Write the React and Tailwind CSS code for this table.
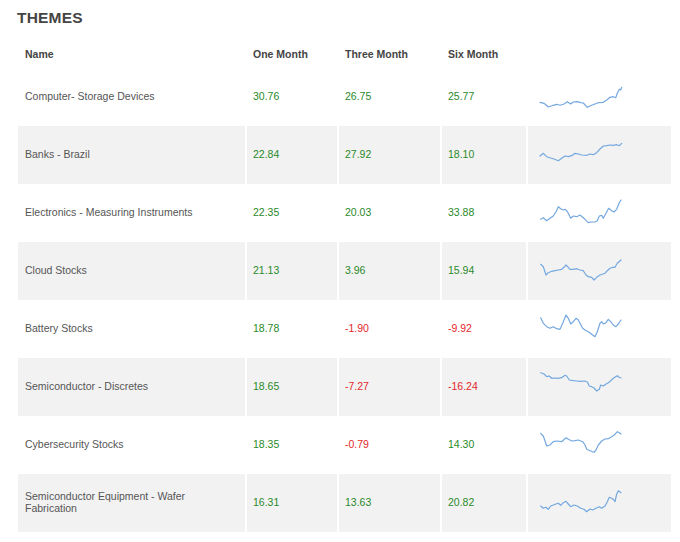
const rows = [
  {
    name: 'Computer- Storage Devices', one: '30.76', three: '26.75', six: '25.77',
    pts: [[0,18.3],[4,19.3],[8.3,23],[13.3,21.3],[16.7,20.3],[20,21.3],[24,20],[27.3,17.7],[30.7,20],[33.3,18],[37.3,17.7],[40.7,18.7],[43.3,19],[47.3,23.3],[51.7,21.3],[55,20],[58.3,18.7],[63.3,18.3],[66.7,16],[70,13.3],[73.3,12.7],[75.7,13.7],[77.3,9.3],[78.3,7.3],[79.3,5.3],[80.7,6],[81.7,3.3]],
  },
  {
    name: 'Banks - Brazil', one: '22.84', three: '27.92', six: '18.10',
    pts: [[0,14],[3.3,11.3],[6.7,14.7],[10.7,16],[14,17],[18.3,18.7],[21.7,16.3],[25,14],[28.3,14.7],[31.7,13.7],[35,11.3],[38.3,12],[41.7,13],[46.7,13.3],[50,12],[53.3,12.7],[56.7,10.7],[60,7],[63.3,4],[66.7,3.7],[70,3],[73.3,3.3],[76.7,2.7],[79.3,3.7],[81.7,1.3]],
  },
  {
    name: 'Electronics - Measuring Instruments', one: '22.35', three: '20.03', six: '33.88',
    pts: [[0.7,19.3],[3.3,17.7],[6.7,20.7],[10,18.3],[13.3,16],[16,11.7],[18.3,6.7],[20.7,8.7],[23.3,10],[25,9.3],[26.7,10.7],[28.3,13.3],[30.7,18.3],[33.3,16],[36.7,16.7],[40,15],[42.7,17.3],[45,19.3],[48.3,22.7],[51.7,22],[55,22],[57.3,20.7],[59.3,16],[61.7,15.3],[63.3,18.3],[66,13.3],[68.7,8.3],[71.7,10.7],[74,12],[76.7,9.3],[79,3.3],[81,0]],
  },
  {
    name: 'Cloud Stocks', one: '21.13', three: '3.96', six: '15.94',
    pts: [[0.7,6.3],[3.3,8.7],[6,17],[8.3,14.7],[11.7,13.3],[15,12.7],[18.3,12],[21.7,11.3],[24,9.3],[26,7],[28.3,9.3],[30,11.3],[33.3,11.3],[36.7,10.7],[40,12],[43.3,12.7],[46,17],[48.3,18.7],[51.7,19.3],[54,22],[56.7,19.3],[60,17],[65,15.3],[67.3,12.7],[70,10.3],[72.7,9.3],[75,9.3],[77.3,5.3],[81,2]],
  },
  {
    name: 'Battery Stocks', one: '18.78', three: '-1.90', six: '-9.92',
    pts: [[0.7,1.7],[3.3,7.3],[6.7,10.7],[10,12.3],[13.3,10.7],[16.7,12.7],[20,13.3],[22.7,7.3],[26,-1],[28.3,2.3],[30.7,8],[33.3,5.7],[36,2.3],[38.3,4],[40,7.3],[42.7,12.3],[45,14],[48.3,15.7],[51.7,18.3],[55,20.7],[57.3,15.7],[60,7.3],[61.7,5.7],[63.3,8],[66,6.7],[68.3,3.3],[70.7,5.7],[73.3,9],[76,10.7],[78.3,8],[81,4]],
  },
  {
    name: 'Semiconductor - Discretes', one: '18.65', three: '-7.27', six: '-16.24',
    pts: [[0.7,-1.3],[4,0],[6.7,2.7],[9.3,2],[11.7,4.3],[15,4],[18.3,4.3],[21.7,3.7],[25,1.3],[26.7,2],[29.3,6],[33.3,6.7],[36.7,7],[40,7.3],[45,7],[47.3,8],[49.3,12],[51.7,12.7],[54,14],[56.7,17],[59.3,15.3],[60.7,11],[63.3,12],[66,10],[68.3,8.7],[70.7,6.7],[73.3,4.3],[75.7,2.7],[77.3,1.7],[79,3.3],[81,4]],
  },
  {
    name: 'Cybersecurity Stocks', one: '18.35', three: '-0.79', six: '14.30',
    pts: [[0.7,1.3],[3.3,4],[6.7,14],[10,13],[13.3,9.7],[16.7,9],[21.7,9.7],[26,5.7],[28.3,7.3],[31.7,9],[35,8.7],[38.3,8],[42.7,9.7],[45,13],[46.7,17.3],[50,18.7],[54,20.3],[56,18],[58.3,13],[61.7,9],[65,7],[68.3,6.7],[71.7,4.7],[74.3,3],[77.3,-0.3],[79.3,0.7],[81,2]],
  },
  {
    name: 'Semiconductor Equipment - Wafer Fabrication', one: '16.31', three: '13.63', six: '20.82',
    pts: [[0.7,16],[3.3,18.3],[6,17.3],[8.3,19.3],[10.7,16],[13.3,15],[16,14],[18.3,13.3],[20.7,15.3],[23.3,12.7],[26,11.3],[28.3,14],[30.7,16.7],[34,15],[37.3,16],[40.7,18.3],[44,19.3],[46.7,21.7],[50,19],[52.7,20],[56,18.3],[59.3,16.7],[61.7,18.3],[65,16],[67.3,11.7],[69.3,7.3],[71.7,8.3],[74,10],[75,11.7],[76.7,4],[78.3,0.7],[81,2.7]],
  },
];

function Value({ v }) {
  const neg = v.startsWith('-');
  return <span className={neg ? 'text-[#e3262b]' : 'text-[#2a8a2a]'}>{v}</span>;
}

function Sparkline({ pts }) {
  const d = pts.map(([x, y], i) => `${i ? 'L' : 'M'}${x} ${y}`).join(' ');
  return (
    <svg width="84" height="26" viewBox="0 0 84 26" className="overflow-visible">
      <path d={d} fill="none" stroke="#74a8e0" strokeWidth="1.2" strokeLinejoin="round" strokeLinecap="round" />
    </svg>
  );
}

const cols = 'grid grid-cols-[227px_90px_101px_84px_143px] gap-x-[2px]';

export default function App() {
  return (
    <div className="w-[680px] h-[542px] bg-white px-[18px] font-['Liberation_Sans',Arial,sans-serif] overflow-hidden">
      <h2 className="-ml-px pt-[9px] text-[15.5px] leading-[18px] font-bold text-[#444] tracking-[0.2px]">THEMES</h2>

      {/* Header row */}
      <div className={`${cols} mt-[11px] h-[30px] pt-[3px] items-center text-[10.5px] font-bold text-[#444]`}>
        <div className="pl-[7px]">Name</div>
        <div className="pl-[6px]">One Month</div>
        <div className="pl-[6px]">Three Month</div>
        <div className="pl-[6px]">Six Month</div>
        <div />
      </div>

      {rows.map((r, i) => {
        const bg = i % 2 ? 'bg-[#f2f2f2]' : 'bg-white';
        return (
          <div key={r.name} className={`${cols} h-[58px] text-[10.5px] leading-[12px]`}>
            <div className={`${bg} flex items-center pb-[2px] pl-[7px] pr-10 text-[#555]`}>{r.name}</div>
            <div className={`${bg} flex items-center pb-[2px] pl-[6px]`}><Value v={r.one} /></div>
            <div className={`${bg} flex items-center pb-[2px] pl-[6px]`}><Value v={r.three} /></div>
            <div className={`${bg} flex items-center pb-[2px] pl-[6px]`}><Value v={r.six} /></div>
            <div className={`${bg} pl-[12px] pt-[16px]`}><Sparkline pts={r.pts} /></div>
          </div>
        );
      })}
    </div>
  );
}
